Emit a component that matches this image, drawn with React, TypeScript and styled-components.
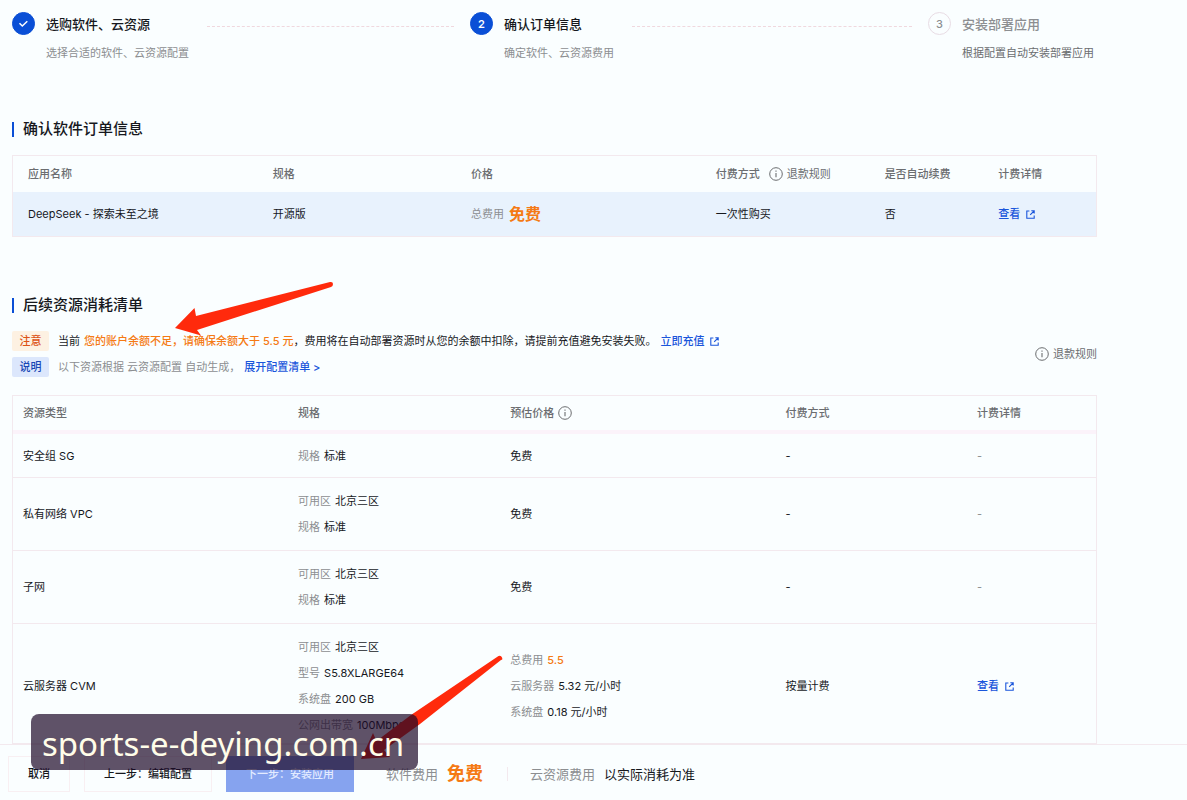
import React from "react";
import styled, { createGlobalStyle } from "styled-components";

const color = {
  page: "#fafeff",
  ink: "#16181d",
  muted: "#6b6d70",
  faint: "#8c8e91",
  blue: "#0a4fd6",
  link: "#1a56db",
  orange: "#f57a14",
  line: "#f3e9ee",
  red: "#ff2a0c",
};

const GlobalStyle = createGlobalStyle`
  *, *::before, *::after { box-sizing: border-box; }
  body {
    margin: 0;
    background: ${color.page};
    color: ${color.ink};
    font-family: Inter, "Noto Sans CJK SC", sans-serif;
    font-size: 11px;
    line-height: 20px;
  }
  h2, p, ol { margin: 0; padding: 0; }
  button { font: inherit; cursor: pointer; }
`;

const Page = styled.div`
  position: relative;
  display: flex;
  flex-direction: column;
  min-height: 100vh;
  overflow-x: hidden;
`;

const Content = styled.main`
  flex: 1;
  padding: 12px 90px 0 12px;
`;

const Steps = styled.ol`
  display: grid;
  grid-template-columns: 1fr 1fr 169px;
  list-style: none;
`;

const Step = styled.li`
  display: flex;
  align-items: flex-start;
`;

const StepBadge = styled.span<{ $pending?: boolean }>`
  flex: none;
  display: flex;
  align-items: center;
  justify-content: center;
  width: 23px;
  height: 23px;
  margin-right: 11px;
  border: 1px solid ${(p) => (p.$pending ? "#e8dce4" : color.blue)};
  border-radius: 50%;
  background: ${(p) => (p.$pending ? "transparent" : color.blue)};
  color: ${(p) => (p.$pending ? color.faint : "#fff")};
  font-weight: ${(p) => (p.$pending ? 500 : 600)};
`;

const StepTitle = styled.p<{ $pending?: boolean }>`
  margin-bottom: 7px;
  color: ${(p) => (p.$pending ? color.faint : color.ink)};
  font-size: 13px;
  font-weight: 500;
  line-height: 24px;
  white-space: nowrap;
`;

const StepNote = styled.p<{ $strong?: boolean }>`
  color: ${(p) => (p.$strong ? color.muted : color.faint)};
  white-space: nowrap;
`;

const StepLine = styled.span`
  flex: 1;
  margin: 14px 16px 0 18px;
  border-top: 1px dashed #f0d8de;
`;

const SectionTitle = styled.h2`
  display: flex;
  align-items: center;
  gap: 9px;
  font-size: 15px;
  font-weight: 500;
  line-height: 24px;
  &::before {
    content: "";
    width: 2px;
    height: 15px;
    background: ${color.blue};
  }
`;

const OrderSection = styled.section`
  margin-top: 54px;
`;

const ResourceSection = styled.section`
  margin-top: 56px;
`;

const Table = styled.table`
  width: 100%;
  border-collapse: separate;
  border-spacing: 0;
  border: 1px solid ${color.line};
  table-layout: fixed;
  text-align: left;
`;

const OrderTable = styled(Table)`
  margin-top: 14px;
  th, td { padding: 0 0 0 15px; }
  th { height: 36px; }
  td { height: 44px; background: #e8f2fd; }
`;

const ResourceTable = styled(Table)`
  margin-top: 15px;
  border-bottom: 0;
  th, td { padding: 0 0 0 10px; }
  th { height: 38px; border-bottom: 4px solid #fbf3fa; }
  td { height: 44px; line-height: 26px; border-bottom: 1px solid ${color.line}; }
  tr:last-child td { padding-top: 5px; }
`;

const Th = styled.th<{ $width?: string }>`
  width: ${(p) => p.$width ?? "auto"};
  color: ${color.muted};
  font-weight: 500;
  white-space: nowrap;
`;

const Td = styled.td`
  white-space: nowrap;
`;

const Detail = styled.div`
  display: flex;
  gap: 4px;
`;

const DetailList = styled.div<{ $tall?: boolean }>`
  padding: ${(p) => (p.$tall ? 5 : 10)}px 0;
`;

const Label = styled.span`
  color: ${color.faint};
`;

const Accent = styled.span`
  color: ${color.orange};
  font-weight: 500;
`;

const Price = styled.strong<{ $large?: boolean }>`
  color: ${color.orange};
  font-size: ${(p) => (p.$large ? 18 : 16)}px;
  font-weight: 700;
`;

const PriceLine = styled.div`
  display: flex;
  align-items: center;
  gap: 5px;
`;

const Hint = styled.span`
  display: inline-flex;
  align-items: center;
  gap: 4px;
  margin-left: 9px;
  color: ${color.muted};
  font-weight: 400;
  vertical-align: top;
`;

const HeadIcon = styled.span`
  display: inline-flex;
  height: 20px;
  align-items: center;
  margin-left: 4px;
  vertical-align: top;
`;

const Link = styled.a`
  display: inline-flex;
  align-items: center;
  gap: 6px;
  color: ${color.link};
  font-weight: 500;
  text-decoration: none;
`;

const NoticeBar = styled.div`
  display: flex;
  align-items: center;
  justify-content: space-between;
  margin-top: 11px;
`;

const Notice = styled.p`
  display: flex;
  align-items: center;
  gap: 4px;
  height: 26px;
  white-space: nowrap;
`;

const Tag = styled.span<{ $info?: boolean }>`
  width: 37px;
  margin-right: 5px;
  border-radius: 2px;
  background: ${(p) => (p.$info ? "#dce7fc" : "#fdf1e2")};
  color: ${(p) => (p.$info ? "#1747b5" : "#dc5316")};
  font-weight: 500;
  text-align: center;
`;

const Footer = styled.footer`
  display: flex;
  align-items: center;
  height: 56px;
  padding: 3px 8px 0;
  border-top: 1px solid ${color.line};
  font-size: 13px;
  white-space: nowrap;
`;

const Button = styled.button<{ $primary?: boolean }>`
  height: 36px;
  padding: 0 19px;
  margin-right: 14px;
  border: 1px solid ${(p) => (p.$primary ? "#86a3ef" : "#f8eff2")};
  background: ${(p) => (p.$primary ? "#86a3ef" : "transparent")};
  color: ${(p) => (p.$primary ? "#e3ebff" : color.ink)};
  font-size: 11px;
  font-weight: 500;
`;

const FooterItem = styled.div`
  display: flex;
  align-items: center;
  gap: 9px;
  margin-left: 18px;
`;

const Divider = styled.span`
  width: 1px;
  height: 14px;
  margin: 0 4px 0 24px;
  background: ${color.line};
`;

const Arrows = styled.svg`
  position: absolute;
  top: 0;
  left: 0;
  pointer-events: none;
`;

const Watermark = styled.div`
  position: absolute;
  bottom: 30px;
  left: 31px;
  padding: 0 14px 0 11px;
  border-radius: 8px;
  background: rgba(28, 8, 40, 0.7);
  color: #fffde9;
  font-family: "Noto Sans", sans-serif;
  font-size: 33px;
  line-height: 60px;
  height: 56px;
  pointer-events: none;
  white-space: nowrap;
`;

const InfoIcon = () => (
  <svg width="14" height="14" viewBox="0 0 14 14" fill="none" stroke="#6b6d70" aria-hidden="true">
    <circle cx="7" cy="7" r="6.3" strokeWidth="1" />
    <path d="M7 6v4.2M7 3.6v1.2" strokeWidth="1.1" />
  </svg>
);

const ExternalIcon = () => (
  <svg width="9" height="9" viewBox="0 0 9 9" fill="none" stroke="#1a56db" strokeWidth="1.1" aria-hidden="true">
    <path d="M3.4 1H.8v7.3h7.4V5.4M5.3.8h2.9v2.8M8 1 4.2 4.8" />
  </svg>
);

const CheckIcon = () => (
  <svg width="11" height="11" viewBox="0 0 11 11" fill="none" stroke="#fff" strokeWidth="1.5" aria-hidden="true">
    <path d="m1.5 5.3 2.8 2.7 5-4.8" />
  </svg>
);

const ViewLink = () => (
  <Link href="#detail">
    查看
    <ExternalIcon />
  </Link>
);

type Pair = [string, string];

const resources: { name: string; spec: Pair[]; price?: Pair[]; pay: string; link?: boolean }[] = [
  { name: "安全组 SG", spec: [["规格", "标准"]], pay: "-" },
  { name: "私有网络 VPC", spec: [["可用区", "北京三区"], ["规格", "标准"]], pay: "-" },
  { name: "子网", spec: [["可用区", "北京三区"], ["规格", "标准"]], pay: "-" },
  {
    name: "云服务器 CVM",
    spec: [["可用区", "北京三区"], ["型号", "S5.8XLARGE64"], ["系统盘", "200 GB"], ["公网出带宽", "100Mbps"]],
    price: [["总费用", "5.5"], ["云服务器", "5.32 元/小时"], ["系统盘", "0.18 元/小时"]],
    pay: "按量计费",
    link: true,
  },
];

export default function App() {
  return (
    <>
      <GlobalStyle />
      <Page lang="zh-CN">
        <Content>
          <Steps>
            <Step>
              <StepBadge><CheckIcon /></StepBadge>
              <div>
                <StepTitle>选购软件、云资源</StepTitle>
                <StepNote>选择合适的软件、云资源配置</StepNote>
              </div>
              <StepLine />
            </Step>
            <Step>
              <StepBadge>2</StepBadge>
              <div>
                <StepTitle>确认订单信息</StepTitle>
                <StepNote>确定软件、云资源费用</StepNote>
              </div>
              <StepLine />
            </Step>
            <Step>
              <StepBadge $pending>3</StepBadge>
              <div>
                <StepTitle $pending>安装部署应用</StepTitle>
                <StepNote $strong>根据配置自动安装部署应用</StepNote>
              </div>
            </Step>
          </Steps>

          <OrderSection>
            <SectionTitle>确认软件订单信息</SectionTitle>
            <OrderTable>
              <thead>
                <tr>
                  <Th $width="22.6%">应用名称</Th>
                  <Th $width="18.3%">规格</Th>
                  <Th $width="22.6%">价格</Th>
                  <Th $width="15.6%">付费方式<Hint><InfoIcon />退款规则</Hint></Th>
                  <Th $width="10.5%">是否自动续费</Th>
                  <Th>计费详情</Th>
                </tr>
              </thead>
              <tbody>
                <tr>
                  <Td>DeepSeek - 探索未至之境</Td>
                  <Td>开源版</Td>
                  <Td><PriceLine><Label>总费用</Label><Price>免费</Price></PriceLine></Td>
                  <Td>一次性购买</Td>
                  <Td>否</Td>
                  <Td><ViewLink /></Td>
                </tr>
              </tbody>
            </OrderTable>
          </OrderSection>

          <ResourceSection>
            <SectionTitle>后续资源消耗清单</SectionTitle>
            <NoticeBar>
              <div>
                <Notice>
                  <Tag>注意</Tag>
                  <span>当前</span>
                  <span>
                    <Accent>您的账户余额不足，请确保余额大于 5.5 元</Accent>
                    ，费用将在自动部署资源时从您的余额中扣除，请提前充值避免安装失败。
                  </span>
                  <Link href="#recharge">立即充值<ExternalIcon /></Link>
                </Notice>
                <Notice>
                  <Tag $info>说明</Tag>
                  <Label>以下资源根据 云资源配置 自动生成，</Label>
                  <Link href="#config">展开配置清单 &gt;</Link>
                </Notice>
              </div>
              <Hint><InfoIcon />退款规则</Hint>
            </NoticeBar>
            <ResourceTable>
              <thead>
                <tr>
                  <Th $width="25.4%">资源类型</Th>
                  <Th $width="19.6%">规格</Th>
                  <Th $width="25.4%">预估价格<HeadIcon><InfoIcon /></HeadIcon></Th>
                  <Th $width="17.7%">付费方式</Th>
                  <Th>计费详情</Th>
                </tr>
              </thead>
              <tbody>
                {resources.map((r) => (
                  <tr key={r.name}>
                    <Td>{r.name}</Td>
                    <Td>
                      {r.spec.length === 1 ? (
                        <Detail><Label>{r.spec[0][0]}</Label>{r.spec[0][1]}</Detail>
                      ) : (
                        <DetailList $tall={r.spec.length > 2}>
                          {r.spec.map(([k, v]) => (
                            <Detail key={k}><Label>{k}</Label>{v}</Detail>
                          ))}
                        </DetailList>
                      )}
                    </Td>
                    <Td>
                      {r.price
                        ? r.price.map(([k, v], i) => (
                            <Detail key={k}><Label>{k}</Label>{i === 0 ? <Accent>{v}</Accent> : v}</Detail>
                          ))
                        : "免费"}
                    </Td>
                    <Td>{r.pay}</Td>
                    <Td>{r.link ? <ViewLink /> : <Label>-</Label>}</Td>
                  </tr>
                ))}
              </tbody>
            </ResourceTable>
          </ResourceSection>
        </Content>

        <Footer>
          <Button type="button">取消</Button>
          <Button type="button">上一步：编辑配置</Button>
          <Button type="button" $primary>下一步：安装应用</Button>
          <FooterItem><Label>软件费用</Label><Price $large>免费</Price></FooterItem>
          <Divider />
          <FooterItem><Label>云资源费用</Label><span>以实际消耗为准</span></FooterItem>
        </Footer>

        <Arrows width="520" height="780" viewBox="0 0 520 780" fill={color.red} aria-hidden="true">
          <path d="M175 328 194.500 308 196 316 330 282Q333 281.500 333 284T331 287L197 330 201 335.500Z" />
          <path d="M361 759 373 733 376.500 741 411 715 498.500 656Q501 655 502 657.500T501 660L420 724 384 750 390 757Z" />
        </Arrows>
        <Watermark>sports-e-deying.com.cn</Watermark>
      </Page>
    </>
  );
}
